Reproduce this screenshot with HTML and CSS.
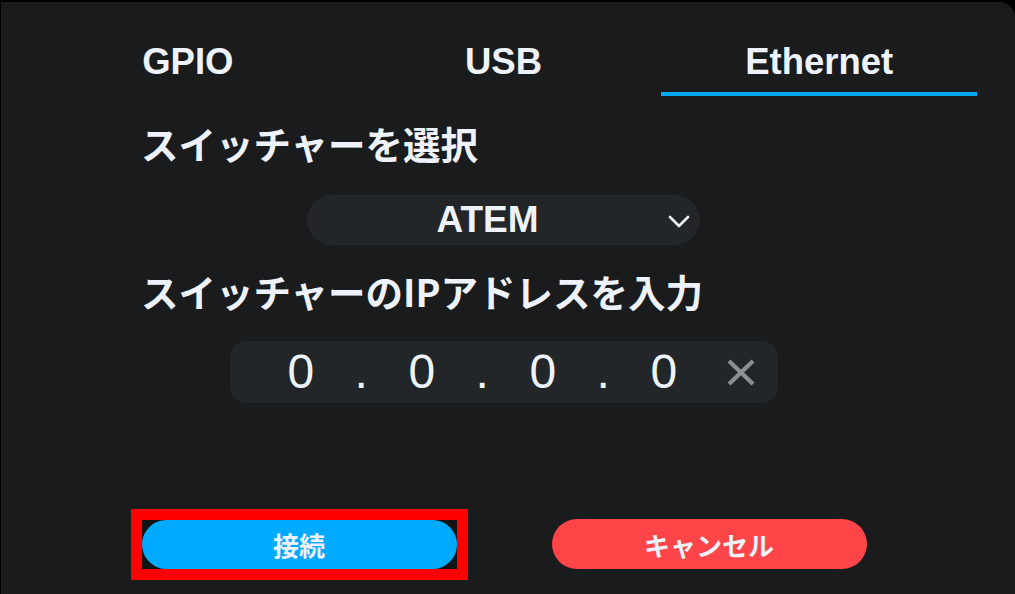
FILE: index.html
```html
<!DOCTYPE html>
<html lang="ja">
<head>
<meta charset="utf-8">
<title>Switcher</title>
<link rel="stylesheet" href="styles.css">
</head>
<body>
<div class="panel">
  <div class="content">
    <nav class="tabs">
      <div class="tab">GPIO</div>
      <div class="tab">USB</div>
      <div class="tab active">Ethernet</div>
    </nav>
    <h2 class="label label-first">スイッチャーを選択</h2>
    <div class="select">
      <span class="select-value">ATEM</span>
      <svg class="chevron" width="22" height="13" viewBox="0 0 22 13"><polyline points="2,2 11,11 20,2" fill="none" stroke="#eef3fb" stroke-width="2.6" stroke-linecap="round" stroke-linejoin="round"/></svg>
    </div>
    <h2 class="label">スイッチャーのIPアドレスを入力</h2>
    <div class="ip">
      <div class="ip-fields">
        <span class="cell">0</span><span class="cell">.</span><span class="cell">0</span><span class="cell">.</span><span class="cell">0</span><span class="cell">.</span><span class="cell">0</span>
      </div>
      <svg class="clear" width="28" height="27" viewBox="0 0 28 27"><path d="M2 2 L26 25 M26 2 L2 25" stroke="#8c9094" stroke-width="4.2" fill="none"/></svg>
    </div>
    <div class="actions">
      <div class="annot"><button class="btn btn-connect">接続</button></div>
      <button class="btn btn-cancel">キャンセル</button>
    </div>
  </div>
</div>
</body>
</html>
```

FILE: styles.css
```css
* { box-sizing: border-box; }
html, body { margin: 0; padding: 0; }
body {
  background: #000;
  width: 1015px;
  height: 594px;
  overflow: hidden;
  font-family: "Liberation Sans", "Noto Sans CJK JP", sans-serif;
  color: #eef3fb;
}
.panel {
  margin: 2px 0 0 1px;
  height: 592px;
  background: #1a1b1d;
  border-top-right-radius: 16px;
}
.content {
  width: 947px;
  margin-left: 29px;
  display: flex;
  flex-direction: column;
}
.tabs {
  display: grid;
  grid-template-columns: repeat(3, 1fr);
}
.tab {
  padding-top: 38px;
  padding-bottom: 8px;
  border-bottom: 4px solid transparent;
  text-align: center;
  font-size: 36.5px;
  line-height: 44px;
  font-weight: 700;
}
.tab.active { border-bottom-color: #00aaf0; }
.label {
  margin: 23px 0 0 0;
  padding-left: 111px;
  font-family: "Noto Sans CJK JP", sans-serif;
  font-size: 37.5px;
  line-height: 46px;
  font-weight: 700;
}
.label-first { margin-top: 24px; }
.select {
  margin: 29px auto 0;
  width: 393px;
  height: 50px;
  border-radius: 25px;
  background: #222628;
  display: flex;
  align-items: center;
  padding-right: 10px;
}
.select-value {
  flex: 1;
  text-align: center;
  font-size: 37px;
  font-weight: 700;
}
.chevron { display: block; margin-top: 2px; }
.ip {
  margin: 27px auto 0;
  width: 548px;
  height: 62px;
  border-radius: 16px;
  background: #222628;
  display: flex;
  align-items: center;
  padding-left: 41px;
}
.ip-fields { display: flex; }
.cell {
  width: 60.5px;
  text-align: center;
  font-size: 48px;
  line-height: 56px;
}
.clear { margin-left: 33px; display: block; }
.actions {
  margin-top: 116px;
  display: grid;
  grid-template-columns: 315px 315px;
  column-gap: 95px;
  justify-content: center;
  align-items: center;
  padding-left: 1px;
}
.annot {
  margin: -11px;
  border: 11px solid #ff0000;
  background: #141414;
}
.btn {
  display: block;
  width: 315px;
  height: 50px;
  border: 0;
  border-radius: 25px;
  font-family: "Noto Sans CJK JP", sans-serif;
  font-size: 26px;
  font-weight: 700;
  color: #eef3fb;
  padding: 0;
}
.btn-connect { background: #00aaff; height: 49px; }
.btn-cancel { background: #ff4548; }
```
